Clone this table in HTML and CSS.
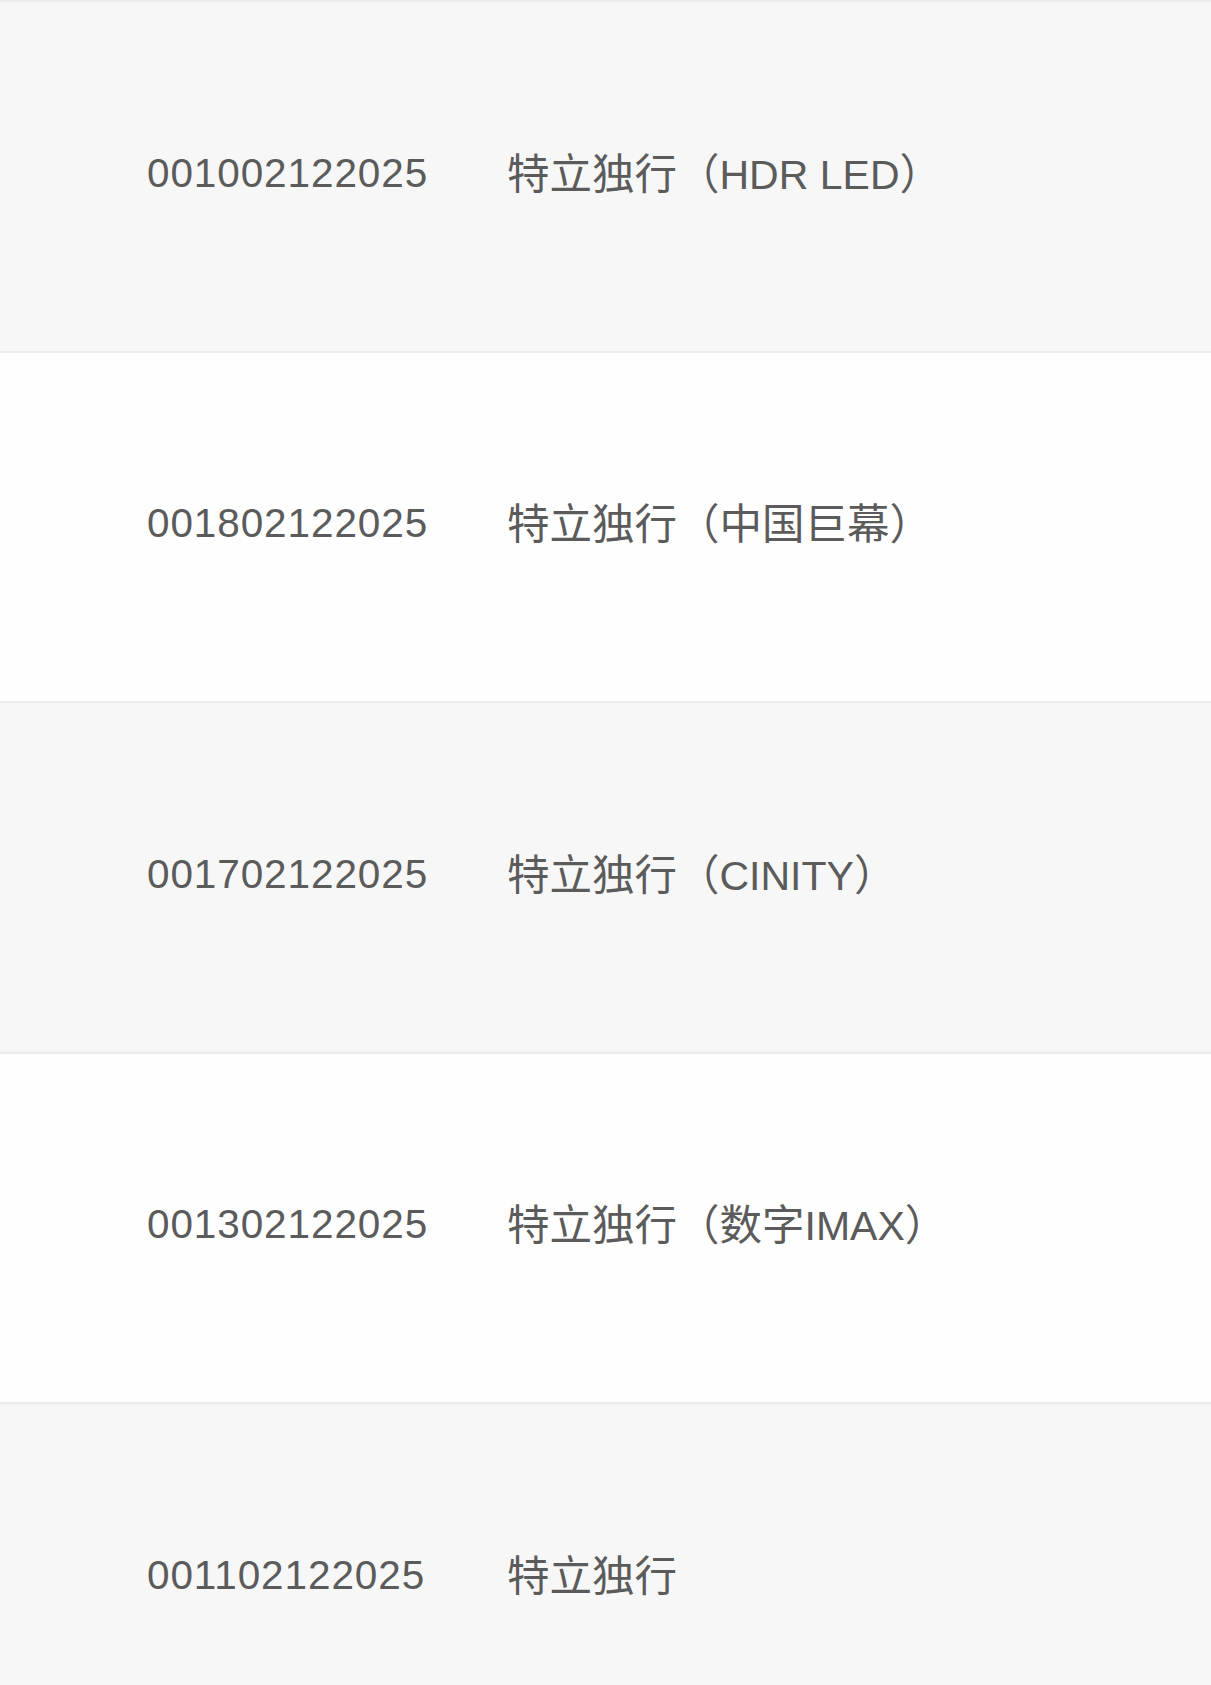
FILE: index.html
```html
<!DOCTYPE html>
<html lang="zh-CN">
  <head>
    <meta charset="UTF-8" />
    <meta name="viewport" content="width=device-width, initial-scale=1" />
    <title>场次列表</title>
    <link rel="stylesheet" href="styles.css">
  </head>
  <body>
    <ul class="film-list">
      <li class="film-row">
        <span class="code">001002122025</span>
        <span class="name"><span class="cjk">特立独行（</span>HDR LED<span class="cjk">）</span></span>
      </li>
      <li class="film-row">
        <span class="code">001802122025</span>
        <span class="name"><span class="cjk">特立独行（中国巨幕）</span></span>
      </li>
      <li class="film-row">
        <span class="code">001702122025</span>
        <span class="name"><span class="cjk">特立独行（</span>CINITY<span class="cjk">）</span></span>
      </li>
      <li class="film-row">
        <span class="code">001302122025</span>
        <span class="name"><span class="cjk">特立独行（数字</span>IMAX<span class="cjk">）</span></span>
      </li>
      <li class="film-row">
        <span class="code">001102122025</span>
        <span class="name"><span class="cjk">特立独行</span></span>
      </li>
    </ul>
  </body>
</html>
```

FILE: styles.css
```css
/* Global Styles */
body {
  margin: 0;
  background-color: #ffffff;
  font-family: "Liberation Sans", Arial, "Noto Sans CJK SC", sans-serif;
  color: #5b5b5b;
}

/* List */
.film-list {
  list-style: none;
  margin: 0;
  padding: 0;
}

.film-row {
  display: grid;
  grid-template-columns: 360px 1fr;
  align-items: center;
  box-sizing: border-box;
  height: 350.5px;
  padding: 0 0 6px 147px;
  border-top: 2px solid #ececf0;
  background-color: #f7f7f7;
}

.film-row:nth-child(even) {
  background-color: #fefefe;
}

.code {
  font-size: 40.5px;
  letter-spacing: 0.9px;
}

.name {
  font-size: 41px;
  padding-bottom: 6px;
}

.cjk {
  font-family: "Noto Sans CJK SC", sans-serif;
  font-size: 42.5px;
}
```
